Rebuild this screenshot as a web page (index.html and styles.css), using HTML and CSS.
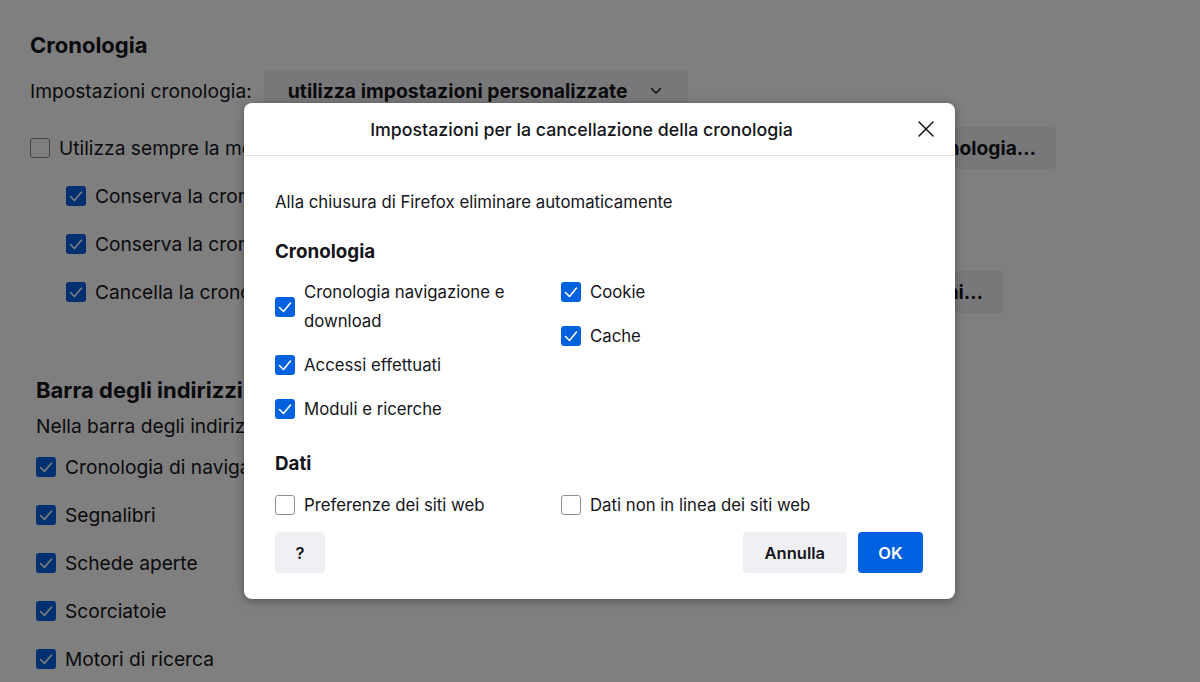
FILE: index.html
```html
<!DOCTYPE html>
<html lang="it">
<head>
<meta charset="utf-8">
<title>Impostazioni</title>
<link rel="stylesheet" href="styles.css">
</head>
<body>
<div class="page">
  <section class="sec-history">
    <h2 class="h-main">Cronologia</h2>
    <div class="mode-row">
      <span class="txt">Impostazioni cronologia:</span>
      <button class="dropdown">utilizza impostazioni personalizzate
        <svg class="chev" width="12" height="8" viewBox="0 0 12 8"><path d="M1.5 1.5 L6 6 L10.5 1.5" fill="none" stroke="#15141a" stroke-width="1.5" stroke-linecap="round" stroke-linejoin="round"/></svg>
      </button>
    </div>
    <div class="row row-a">
      <span class="cb off"></span><span class="txt">Utilizza sempre la modalità Navigazione anonima</span>
      <span class="grow"></span>
      <button class="bg-btn">Cancella cronologia…</button>
    </div>
    <div class="row indent">
      <span class="cb on"><svg viewBox="0 0 20 20"><path d="M4.5 10.5 L8.5 14.5 L15.5 6" fill="none" stroke="#fff" stroke-width="1.6" stroke-linecap="round" stroke-linejoin="round"/></svg></span><span class="txt">Conserva la cronologia di navigazione e dei download</span>
    </div>
    <div class="row indent">
      <span class="cb on"><svg viewBox="0 0 20 20"><path d="M4.5 10.5 L8.5 14.5 L15.5 6" fill="none" stroke="#fff" stroke-width="1.6" stroke-linecap="round" stroke-linejoin="round"/></svg></span><span class="txt">Conserva la cronologia delle ricerche e dei moduli</span>
    </div>
    <div class="row indent row-c">
      <span class="cb on"><svg viewBox="0 0 20 20"><path d="M4.5 10.5 L8.5 14.5 L15.5 6" fill="none" stroke="#fff" stroke-width="1.6" stroke-linecap="round" stroke-linejoin="round"/></svg></span><span class="txt">Cancella la cronologia alla chiusura di Firefox</span>
      <span class="grow"></span>
      <button class="bg-btn">Impostazioni…</button>
    </div>
  </section>
  <section class="sec-bar">
    <h2 class="h-main">Barra degli indirizzi</h2>
    <p class="txt sub">Nella barra degli indirizzi visualizza suggerimenti da</p>
    <div class="row"><span class="cb on"><svg viewBox="0 0 20 20"><path d="M4.5 10.5 L8.5 14.5 L15.5 6" fill="none" stroke="#fff" stroke-width="1.6" stroke-linecap="round" stroke-linejoin="round"/></svg></span><span class="txt">Cronologia di navigazione</span></div>
    <div class="row"><span class="cb on"><svg viewBox="0 0 20 20"><path d="M4.5 10.5 L8.5 14.5 L15.5 6" fill="none" stroke="#fff" stroke-width="1.6" stroke-linecap="round" stroke-linejoin="round"/></svg></span><span class="txt">Segnalibri</span></div>
    <div class="row"><span class="cb on"><svg viewBox="0 0 20 20"><path d="M4.5 10.5 L8.5 14.5 L15.5 6" fill="none" stroke="#fff" stroke-width="1.6" stroke-linecap="round" stroke-linejoin="round"/></svg></span><span class="txt">Schede aperte</span></div>
    <div class="row"><span class="cb on"><svg viewBox="0 0 20 20"><path d="M4.5 10.5 L8.5 14.5 L15.5 6" fill="none" stroke="#fff" stroke-width="1.6" stroke-linecap="round" stroke-linejoin="round"/></svg></span><span class="txt">Scorciatoie</span></div>
    <div class="row"><span class="cb on"><svg viewBox="0 0 20 20"><path d="M4.5 10.5 L8.5 14.5 L15.5 6" fill="none" stroke="#fff" stroke-width="1.6" stroke-linecap="round" stroke-linejoin="round"/></svg></span><span class="txt">Motori di ricerca</span></div>
  </section>
</div>

<div class="overlay"></div>

<div class="dialog">
  <div class="dlg-head">
    <div class="dlg-title">Impostazioni per la cancellazione della cronologia</div>
    <button class="close" aria-label="Chiudi">
      <svg width="18" height="18" viewBox="0 0 18 18"><path d="M2 2 L16 16 M16 2 L2 16" fill="none" stroke="#15141a" stroke-width="1.5" stroke-linecap="round"/></svg>
    </button>
  </div>
  <div class="dlg-body">
    <p class="intro">Alla chiusura di Firefox eliminare automaticamente</p>
    <h3 class="dh">Cronologia</h3>
    <div class="grid">
      <div class="col">
        <div class="item">
          <span class="cb on"><svg viewBox="0 0 20 20"><path d="M4.5 10.5 L8.5 14.5 L15.5 6" fill="none" stroke="#fff" stroke-width="1.6" stroke-linecap="round" stroke-linejoin="round"/></svg></span>
          <span class="lbl wrap">Cronologia navigazione e download</span>
        </div>
        <div class="item">
          <span class="cb on"><svg viewBox="0 0 20 20"><path d="M4.5 10.5 L8.5 14.5 L15.5 6" fill="none" stroke="#fff" stroke-width="1.6" stroke-linecap="round" stroke-linejoin="round"/></svg></span>
          <span class="lbl">Accessi effettuati</span>
        </div>
        <div class="item">
          <span class="cb on"><svg viewBox="0 0 20 20"><path d="M4.5 10.5 L8.5 14.5 L15.5 6" fill="none" stroke="#fff" stroke-width="1.6" stroke-linecap="round" stroke-linejoin="round"/></svg></span>
          <span class="lbl">Moduli e ricerche</span>
        </div>
      </div>
      <div class="col">
        <div class="item">
          <span class="cb on"><svg viewBox="0 0 20 20"><path d="M4.5 10.5 L8.5 14.5 L15.5 6" fill="none" stroke="#fff" stroke-width="1.6" stroke-linecap="round" stroke-linejoin="round"/></svg></span>
          <span class="lbl">Cookie</span>
        </div>
        <div class="item">
          <span class="cb on"><svg viewBox="0 0 20 20"><path d="M4.5 10.5 L8.5 14.5 L15.5 6" fill="none" stroke="#fff" stroke-width="1.6" stroke-linecap="round" stroke-linejoin="round"/></svg></span>
          <span class="lbl">Cache</span>
        </div>
      </div>
    </div>
    <h3 class="dh dh-dati">Dati</h3>
    <div class="grid">
      <div class="col">
        <div class="item"><span class="cb off"></span><span class="lbl">Preferenze dei siti web</span></div>
      </div>
      <div class="col">
        <div class="item"><span class="cb off"></span><span class="lbl">Dati non in linea dei siti web</span></div>
      </div>
    </div>
    <div class="actions">
      <button class="btn help">?</button>
      <div class="spacer"></div>
      <button class="btn">Annulla</button>
      <button class="btn primary">OK</button>
    </div>
  </div>
</div>
</body>
</html>
```

FILE: styles.css
```css
* { box-sizing: border-box; }
html, body { margin: 0; padding: 0; }
body {
  width: 1200px;
  height: 682px;
  overflow: hidden;
  background: #ffffff;
  color: #15141a;
  font-family: Inter, "Liberation Sans", Arial, sans-serif;
  position: relative;
}
button { font-family: inherit; border: 0; margin: 0; }
p, h2, h3 { margin: 0; }

.page { padding-top: 31px; }
.txt { font-size: 19.2px; line-height: 24px; white-space: nowrap; }
.grow { flex: 1; }
.h-main { font-size: 22px; line-height: 28px; font-weight: 700; white-space: nowrap; }

.sec-history { padding-left: 30px; }
.mode-row { display: flex; align-items: center; gap: 12px; margin-top: 11px; }
.dropdown {
  display: flex; align-items: center;
  width: 424px; height: 42px;
  padding: 0 26px 0 24px;
  background: #f0f0f4; border-radius: 4px;
  font-size: 19.4px; font-weight: 700; color: #15141a;
  justify-content: space-between;
}
.row { display: flex; align-items: center; height: 48px; }
.row-a { margin-top: 12px; width: 1026px; }
.row-c { width: 973px; }
.indent { padding-left: 36px; }
.bg-btn {
  flex: none;
  height: 42px; padding: 0 20px; border-radius: 4px;
  background: #f0f0f4; font-size: 19.2px; font-weight: 700; color: #15141a;
}

.cb {
  flex: none; width: 20px; height: 20px; border-radius: 3px;
  margin-right: 9px; display: inline-flex;
}
.cb svg { width: 20px; height: 20px; display: block; }
.cb.on { background: #0061e0; }
.cb.off { background: #fff; border: 1px solid #8f8f9d; }

.sec-bar { padding-left: 36px; margin-top: 60px; }
.sub { margin-top: 10px; margin-bottom: 5px; }

.overlay {
  position: absolute; inset: 0;
  background: rgba(0, 0, 0, 0.5);
}

.dialog {
  position: absolute; left: 244px; top: 103px;
  width: 711px; height: 496px;
  background: #fff; border-radius: 8px;
  box-shadow: 0 2px 10px rgba(0, 0, 0, 0.35);
}
.dlg-head {
  display: flex; align-items: center;
  height: 53px; padding: 0 11px 0 31px;
  border-bottom: 1px solid #e0e0e6;
}
.dlg-title { flex: 1; text-align: center; font-size: 17.8px; font-weight: 500; margin-right: 20px; white-space: nowrap; }
.close {
  width: 36px; height: 36px; background: transparent; padding: 0;
  display: flex; align-items: center; justify-content: center;
}
.dlg-body { padding: 34px 32px 26px 31px; }
.intro { font-size: 16.75px; line-height: 24px; }
.dh { font-size: 18.75px; line-height: 24px; font-weight: 700; margin-top: 26px; }
.dh-dati { margin-top: 21px; }
.grid { display: grid; grid-template-columns: 286px 1fr; margin-top: 6px; }
.dh-dati + .grid { margin-top: 7px; }
.item { display: flex; align-items: center; padding: 7.5px 0; min-height: 44px; }
.lbl { font-size: 16.75px; line-height: 29px; }
.lbl.wrap { width: 225px; }

.actions { display: flex; align-items: center; gap: 11px; margin-top: 5px; }
.spacer { flex: 1; }
.btn {
  height: 41px; padding: 0 22px; border-radius: 4px;
  background: #f0f0f4; color: #15141a;
  font-size: 16.5px; font-weight: 600;
}
.btn.help { width: 50px; padding: 0; }
.btn.primary { background: #0061e0; color: #fff; width: 65px; padding: 0; }
```
